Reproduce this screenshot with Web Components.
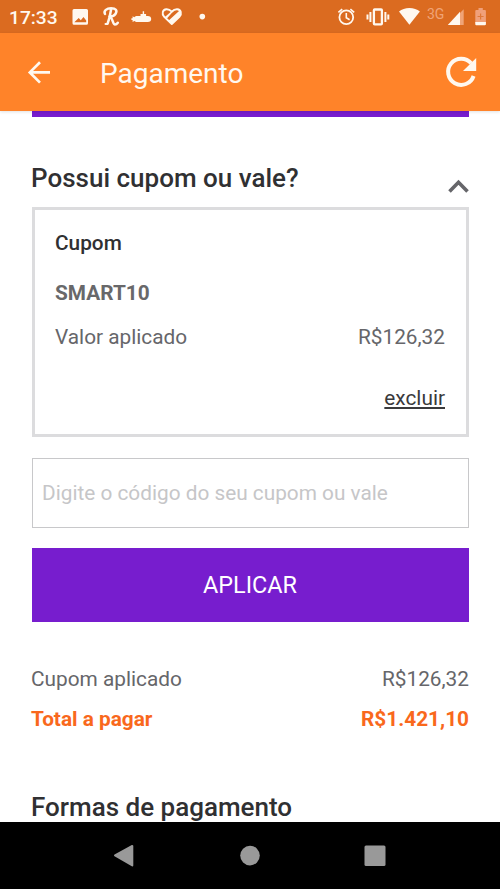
<!DOCTYPE html>
<html lang="pt-BR">
<head>
<meta charset="utf-8">
<title>Pagamento</title>
<style>
html,body{margin:0;height:100%;overflow:hidden;background:#fff}
body{font-family:Roboto,"Liberation Sans",sans-serif}
</style>
</head>
<body>
<payment-screen></payment-screen>
<script>
function define(name, html) {
  const t = document.createElement('template');
  t.innerHTML = html;
  customElements.define(name, class extends HTMLElement {
    constructor() {
      super();
      this.attachShadow({mode: 'open'}).appendChild(t.content.cloneNode(true));
    }
  });
}

define('status-bar', `
<style>
:host{display:flex;justify-content:space-between;height:33px;background:#db6b20;color:#fff8ef}
.time{font-size:19.2px;line-height:35px;width:63px;padding-left:9px;box-sizing:border-box;font-weight:500;white-space:nowrap}
.left{display:flex}
svg{display:block;flex:none}
.net{font-size:14px;line-height:28px;color:#f0a477;width:19px;padding-left:7px;margin-right:1px}
.right{display:flex}
</style>
<div class="left"><span class="time">17:33</span>
<svg width="160" height="33" viewBox="63 0 160 33" fill="#fff8ef">
<path fill-rule="evenodd" d="M74 9h12.500a1.500 1.500 0 0 1 1.500 1.500v12.800a1.500 1.500 0 0 1-1.500 1.500H74a1.500 1.500 0 0 1-1.500-1.500V10.500A1.500 1.500 0 0 1 74 9zM74.300 22.300h11.900v-1.800l-2.700-3.500-2.700 3.300-2.100-2.200z"/>
<g fill="none" stroke="#fff8ef" stroke-linecap="round" stroke-linejoin="round"><path stroke-width="2.500" d="M105 14c-1.800-3.200 2-5.800 6-5.800 5 0 6.500 2.600 4.600 5.500-1.500 2.200-4 2.900-6.300 2.700M111 10c-.8 5-1.800 9.500-3.300 13.300M110.300 17.200c2.700 1.300 2.400 7.300 4.700 7.300 1.200 0 2-.6 2.800-1.700"/><path stroke-width="2" d="M107.500 24h-2"/></g>
<path d="M140.500 16v-2h2.200v-2.800h1.400v2.800h2v2h1.700c2.200 0 3.400 1.200 3.400 3s-1.200 3-3.400 3h-10.500c-1.300 0-2.300-.5-3-1l-1.700 1v-2h-1.200v-1.800h1.200v-2l1.700 1c.7-.6 1.700-1.200 3-1.200z"/>
<path fill="none" stroke="#fff8ef" stroke-width="1.900" stroke-linejoin="round" d="M171.800 24l-7.600-7.200c-2.800-2.800-1.600-7.300 2.100-7.600 2.200-.2 4 .9 5.500 2.400 1.500-1.500 3.300-2.600 5.500-2.400 3.700.3 4.900 4.800 2.100 7.600z"/><path d="M164.600 17.200l7.200-6.300c1-.9 2.200-1.600 3.500-1.800l-8.800 9.900zM168.400 20.700l11.500-10.400c1.200 1.500 1.300 3.500.4 5.200l-8.500 8.500z"/>
<circle cx="202.300" cy="16.600" r="2.800"/>
</svg></div>
<div class="right">
<svg width="90" height="33" viewBox="330 0 90 33" fill="none" stroke="#fff8ef">
<circle cx="346.300" cy="17.300" r="6.900" stroke-width="1.800"/><path stroke-width="1.600" d="M346.300 13v4.700l3.300 2M338.400 12.300l3.800-3.200M354.200 12.300l-3.800-3.200"/>
<rect x="373.900" y="9.500" width="8" height="14.800" rx=".8" stroke-width="2.300"/><path stroke-width="2" d="M370.400 12v10M385.400 12v10M367.500 14.500v5M388.300 14.500v5"/>
<path stroke="none" fill="#fff8ef" d="M399 11.500c2.700-2.200 6.400-3.400 10.400-3.400 4 0 7.800 1.200 10.500 3.400l-10.500 13.200z"/>
</svg>
<span class="net">3G</span>
<svg width="53" height="33" viewBox="447 0 53 33">
<path fill="#f0a477" d="M459 14l4.700-4.700V25H459z"/><path fill="#fff8ef" d="M447.800 25l12.200-13.200V25z"/>
<path fill="#f0a07a" d="M478.500 8h4.300v2h2.200c.5 0 .9.400.9.900v12.300h-10.600V10.900c0-.5.400-.9.900-.9h2.300z"/><path fill="#fff8ef" d="M475.300 22h10.600v2.300c0 .5-.4.900-.9.900h-8.800c-.5 0-.9-.4-.9-.9z"/><path stroke="#df7838" stroke-width="1.200" d="M480.600 13.500v6M477.600 16.500h6"/>
</svg></div>`);

define('app-bar', `
<style>
:host{display:flex;align-items:center;height:78px;background:#ff8329;color:#fff8ef;position:relative;z-index:1;box-shadow:0 1px 3px rgba(0,0,0,.12)}
svg{display:block;flex:none}
h1{font-size:28px;font-weight:400;line-height:34px;margin:3px auto 0 0;padding-left:20px;white-space:nowrap}
</style>
<svg width="80" height="78" viewBox="0 33 80 78" fill="none" stroke="#fff8ef" stroke-width="2.700"><path d="M40 62.200L29.800 72.400l10.200 10.200M30 72.400h20"/></svg>
<h1><slot></slot></h1>
<svg width="70" height="78" viewBox="430 33 70 78"><path fill="none" stroke="#fff8ef" stroke-width="4" d="M471.200 63.300A13.100 13.100 0 1 0 473.600 76"/><path fill="#fff8ef" d="M476.200 58v13H463z"/></svg>`);

define('section-title', `
<style>
:host{display:flex;justify-content:space-between;height:30px}
h2{margin:0 0 0 -1px;font-size:26px;line-height:31px;font-weight:500;color:#303032;white-space:nowrap}
</style>
<h2><slot></slot></h2><slot name="icon"></slot>`);

define('value-row', `
<style>
:host{display:flex;justify-content:space-between;height:24px;font-size:20.8px;line-height:24px;color:#66666a;white-space:nowrap}
:host([tone=total]){color:#f9681c;font-weight:700}
</style>
<slot></slot><slot name="value"></slot>`);

define('coupon-card', `
<style>
:host{display:flex;flex-direction:column;box-sizing:border-box;height:230px;border:3px solid #dcdcde;padding:21px 21px 0 20px;font-size:20.8px;line-height:24px}
.t{font-weight:500;color:#303032}
.code{font-weight:700;color:#68686a;margin:26px 0 20px}
a{align-self:flex-end;margin-top:37px;color:#3a3a3c;text-decoration:underline;text-decoration-thickness:1.500px;text-underline-offset:2px}
</style>
<div class="t"><slot name="title"></slot></div><div class="code"><slot name="code"></slot></div>
<slot></slot><a><slot name="action"></slot></a>`);

define('coupon-field', `
<style>:host{display:flex;align-items:center;box-sizing:border-box;height:70px;border:1.500px solid #c8c8ca;padding:0 9px 1px;font-size:20.8px;color:#c6c6c8;white-space:nowrap}</style>
<slot></slot>`);

define('action-button', `
<style>:host{display:flex;align-items:center;justify-content:center;box-sizing:border-box;height:74px;padding-right:1px;background:#771dce;color:#fff;font-size:23.4px}</style>
<slot></slot>`);

define('nav-bar', `
<style>:host{display:block;height:67px;background:#000}svg{display:block}</style>
<svg width="500" height="67" viewBox="0 822 500 67" fill="#999" stroke="#999" stroke-linejoin="round"><path stroke-width="2" d="M115 855.500l17.300-9.500v19.500z"/><circle cx="250" cy="855.600" r="9.800" stroke="none"/><rect x="364.500" y="845.500" width="21" height="20.500" rx="1.500" stroke="none"/></svg>`);

define('payment-screen', `
<style>
:host{display:flex;flex-direction:column;height:889px;width:500px;background:#fff}
main{flex:1;min-height:0;overflow:hidden;padding:0 31px 0 32px}
.strip{height:6px;background:#771dce;margin-bottom:46px}
.chev{display:block;margin-top:14px}
coupon-card{margin:14px 0 21px}
coupon-field{margin-bottom:20px}
action-button{margin-bottom:45px}
.sum{margin-left:-1px}
.total{margin-top:16px;margin-bottom:61px}
</style>
<status-bar></status-bar>
<app-bar>Pagamento</app-bar>
<main>
<div class="strip"></div>
<section-title>Possui cupom ou vale?<svg slot="icon" class="chev" width="21" height="18" viewBox="0 0 21 18" fill="none" stroke="#66666a" stroke-width="3.600"><path d="M1.500 14.500l9-9.200 9 9.200"/></svg></section-title>
<coupon-card><span slot="title">Cupom</span><span slot="code">SMART10</span>
<value-row>Valor aplicado<span slot="value">R$126,32</span></value-row>
<span slot="action">excluir</span></coupon-card>
<coupon-field>Digite o código do seu cupom ou vale</coupon-field>
<action-button>APLICAR</action-button>
<value-row class="sum">Cupom aplicado<span slot="value">R$126,32</span></value-row>
<value-row class="sum total" tone="total">Total a pagar<span slot="value">R$1.421,10</span></value-row>
<section-title>Formas de pagamento</section-title>
</main>
<nav-bar></nav-bar>`);
</script>
</body>
</html>
